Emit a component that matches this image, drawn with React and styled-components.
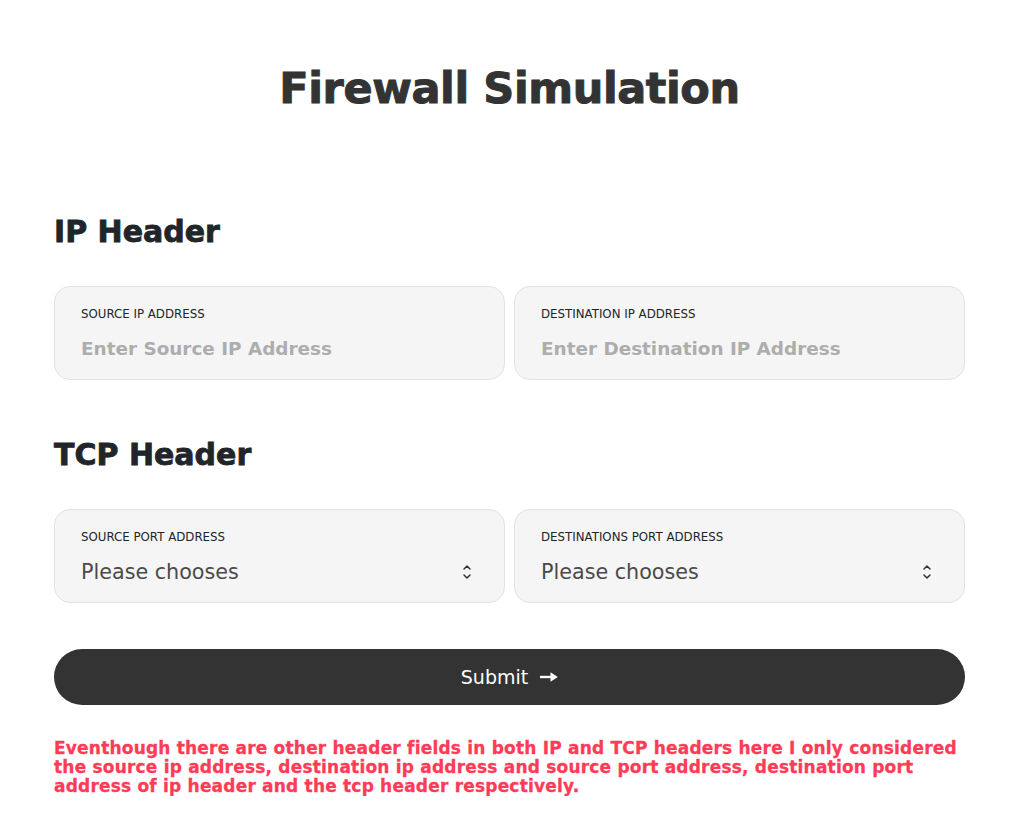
import React from "react";
import styled, { createGlobalStyle } from "styled-components";

const GlobalStyle = createGlobalStyle`
    body {
        margin: 0;
        background: #fff;
        font-family: "DejaVu Sans", "Noto Sans", sans-serif;
    }
`;

const Page = styled.div`
    width: 911px;
    margin: 0 auto;
    padding-top: 62px;
`;

const Title = styled.h1`
    margin: 0 0 98px;
    text-align: center;
    font-size: 43px;
    font-weight: 700;
    letter-spacing: -0.4px;
    color: #333;
    line-height: 52px;
    -webkit-text-stroke: 1px #333;
`;

const SectionTitle = styled.h2`
    margin: 0 0 34px;
    font-size: 30px;
    font-weight: 700;
    color: #212529;
    line-height: 40px;
    -webkit-text-stroke: 0.8px #212529;
`;

const Row = styled.div`
    display: grid;
    grid-template-columns: 1fr 1fr;
    gap: 9px;
    margin-bottom: ${(p) => p.$mb || 0}px;
`;

const Card = styled.label`
    display: flex;
    flex-direction: column;
    height: 94px;
    box-sizing: border-box;
    padding: 20px 26px 0;
    background: #f5f5f5;
    border: 1px solid #e3e3e3;
    border-radius: 16px;
`;

const Label = styled.span`
    font-size: 11.8px;
    color: #212529;
    text-transform: uppercase;
    line-height: 14px;
`;

const Input = styled.input`
    margin-top: 17px;
    border: 0;
    padding: 0;
    outline: none;
    background: transparent;
    font-family: inherit;
    font-size: 18.4px;
    font-weight: 600;
    color: #333;
    &::placeholder {
        color: #adadad;
    }
`;

const SelectRow = styled.div`
    margin-top: 16px;
    display: flex;
    align-items: center;
    justify-content: space-between;
    padding-right: 6px;
    font-size: 20.7px;
    color: #4a4a4a;
    line-height: 24px;
`;

const Button = styled.button`
    display: flex;
    align-items: center;
    justify-content: center;
    gap: 12px;
    width: 100%;
    height: 56px;
    margin-top: 46px;
    border: 0;
    border-radius: 28px;
    background: #333;
    color: #fff;
    font-family: inherit;
    font-size: 19px;
    cursor: pointer;
`;

const Note = styled.p`
    margin: 34px 0 0;
    color: #ff3b57;
    font-size: 17px;
    font-weight: 700;
    line-height: 19px;
    letter-spacing: 0.2px;
    -webkit-text-stroke: 0.3px #ff3b57;
`;

const Chevrons = () => (
    <svg width="10" height="18" viewBox="0 0 10 18" fill="none" stroke="#333" strokeWidth="1.5" strokeLinecap="round" strokeLinejoin="round">
        <path d="M2 6 L5 3 L8 6" />
        <path d="M2 12 L5 15 L8 12" />
    </svg>
);

const Arrow = () => (
    <svg width="18" height="10" viewBox="0 0 18 10" fill="#fff">
        <rect x="0" y="3.8" width="13" height="2.4" />
        <path d="M10.5 0.3 L17.8 5 L10.5 9.7 Z" />
    </svg>
);

function TextField({ label, placeholder }) {
    return (
        <Card>
            <Label>{label}</Label>
            <Input placeholder={placeholder} />
        </Card>
    );
}

function SelectField({ label }) {
    return (
        <Card>
            <Label>{label}</Label>
            <SelectRow>
                <span>Please chooses</span>
                <Chevrons />
            </SelectRow>
        </Card>
    );
}

export default function App() {
    return (
        <Page>
            <GlobalStyle />
            <Title>Firewall Simulation</Title>
            <SectionTitle>IP Header</SectionTitle>
            <Row $mb={55}>
                <TextField label="Source IP Address" placeholder="Enter Source IP Address" />
                <TextField label="Destination IP Address" placeholder="Enter Destination IP Address" />
            </Row>
            <SectionTitle>TCP Header</SectionTitle>
            <Row>
                <SelectField label="Source Port Address" />
                <SelectField label="Destinations Port Address" />
            </Row>
            <Button>
                Submit <Arrow />
            </Button>
            <Note>
                Eventhough there are other header fields in both IP and TCP headers here I only considered the source ip address, destination ip address and source port address, destination port address of ip header and the tcp header respectively.
            </Note>
        </Page>
    );
}
